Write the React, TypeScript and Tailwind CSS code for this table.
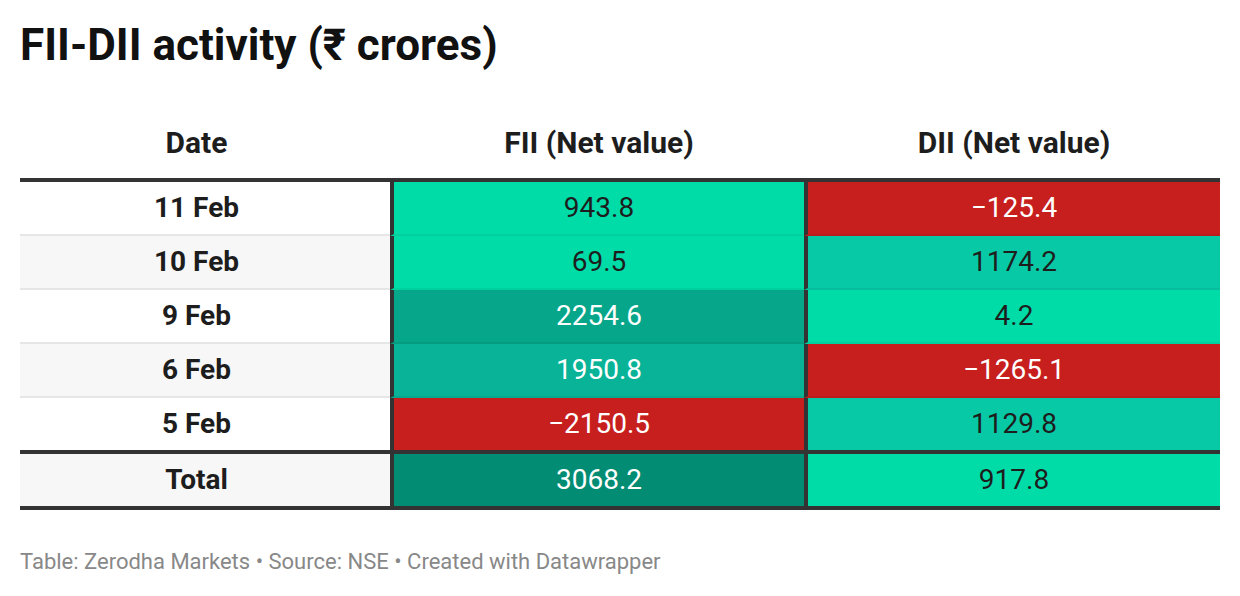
import React from 'react'

type Cell = { value: string; bg: string; light?: boolean }

interface Row {
  date: string
  fii: Cell
  dii: Cell
}

const BRIGHT = 'bg-[#00dca8]'
const MID = 'bg-[#08c9a5]'
const RED = 'bg-[#c71e1e]'

const ROWS: Row[] = [
  { date: '11 Feb', fii: { value: '943.8', bg: BRIGHT }, dii: { value: '−125.4', bg: RED, light: true } },
  { date: '10 Feb', fii: { value: '69.5', bg: BRIGHT }, dii: { value: '1174.2', bg: MID } },
  { date: '9 Feb', fii: { value: '2254.6', bg: 'bg-[#06a68a]', light: true }, dii: { value: '4.2', bg: BRIGHT } },
  { date: '6 Feb', fii: { value: '1950.8', bg: 'bg-[#09b397]', light: true }, dii: { value: '−1265.1', bg: RED, light: true } },
  { date: '5 Feb', fii: { value: '−2150.5', bg: RED, light: true }, dii: { value: '1129.8', bg: MID } },
]

function ValueCell({ cell, width, divider }: { cell: Cell; width: string; divider?: boolean }) {
  return (
    <div
      className={`${width} ${cell.bg} ${cell.light ? 'text-white' : 'text-[#1d1d1d]'} ${divider ? 'border-b-2 border-b-black/[0.06]' : ''} flex items-center justify-center border-l-4 border-l-[#333333]`}
    >
      {cell.value}
    </div>
  )
}

export default function App() {
  return (
    <div className="w-[1240px] h-[596px] bg-white px-5 pt-[19px] font-['Roboto','Liberation_Sans',sans-serif] text-[#1d1d1d]">
      <h1 className="text-[44px] leading-[52px] font-bold text-[#111]">FII-DII activity (₹ crores)</h1>

      {/* Header */}
      <div className="mt-9 flex h-[71px] items-center text-[30px] font-bold">
        <div className="w-[370px] pr-[17px] text-center">Date</div>
        <div className="w-[414px] pl-1 text-center">FII (Net value)</div>
        <div className="w-[416px] pl-1 text-center">DII (Net value)</div>
      </div>

      {/* Body */}
      <div className="border-t-4 border-b-4 border-[#333333] text-[28px]">
        {ROWS.map((row, i) => {
          const divider = i < ROWS.length - 1
          return (
            <div key={row.date} className={`flex ${divider ? 'h-[54px]' : 'h-[52px]'}`}>
              <div
                className={`w-[370px] pr-[17px] flex items-center justify-center font-bold ${divider ? 'border-b-2 border-b-[#e6e6e6]' : ''} ${i % 2 === 1 ? 'bg-[#f7f7f7]' : 'bg-white'}`}
              >
                {row.date}
              </div>
              <ValueCell cell={row.fii} width="w-[414px]" divider={divider} />
              <ValueCell cell={row.dii} width="w-[416px]" divider={divider} />
            </div>
          )
        })}

        {/* Total */}
        <div className="flex h-[56px] border-t-4 border-[#333333]">
          <div className="w-[370px] pr-[17px] flex items-center justify-center font-bold bg-[#f7f7f7]">Total</div>
          <ValueCell cell={{ value: '3068.2', bg: 'bg-[#028c73]', light: true }} width="w-[414px]" />
          <ValueCell cell={{ value: '917.8', bg: BRIGHT }} width="w-[416px]" />
        </div>
      </div>

      <p className="mt-[39px] text-[22px] leading-[26px] text-[#888888]">
        Table: Zerodha Markets • Source: NSE • Created with Datawrapper
      </p>
    </div>
  )
}
